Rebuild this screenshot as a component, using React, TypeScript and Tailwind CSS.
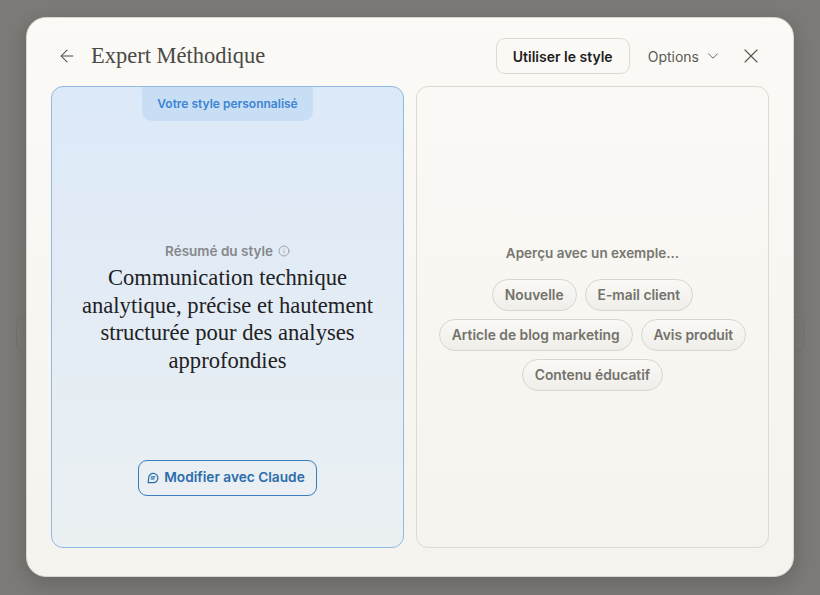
import React from 'react';
import { ArrowLeft, ChevronDown, X, Info } from 'lucide-react';

const SANS = "font-['Inter','Liberation_Sans',sans-serif]";

const samples = ['Nouvelle', 'E-mail client', 'Article de blog marketing', 'Avis produit', 'Contenu éducatif'];

const ChatIcon = () => (
  <svg width="12" height="12" viewBox="0 0 12 12" fill="none" stroke="currentColor" strokeWidth="1.2" className="shrink-0">
    <path d="M1.2 10.8 L1.7 6 A4.6 4.6 0 1 1 6 10.6 H1.2 Z" strokeLinejoin="round" />
    <path d="M4.2 4.8 H8 M4.2 6.9 H7" strokeLinecap="round" />
  </svg>
);

const App: React.FC = () => {
  return (
    <div className={`relative h-[595px] w-[820px] overflow-hidden bg-[#7c7b78] pt-[17px] ${SANS}`}>
      {/* page behind the backdrop */}
      <div className="absolute left-[16px] top-[316px] h-[37px] w-[788px] rounded-[10px] border border-[#747370]" />

      <div className="relative mx-auto flex h-[560px] w-[768px] flex-col rounded-[20px] border border-[#d9d7d0] bg-gradient-to-b from-[#fbfaf7] to-[#f4f3ed] px-[24px] pb-[28px] shadow-[0_6px_24px_rgba(0,0,0,0.2)]">
        <div className="flex h-[68px] shrink-0 items-center pt-[8px]">
          <ArrowLeft className="ml-[6px] h-[20px] w-[20px] text-[#4a4944]" strokeWidth={1.25} />
          <h1 className="ml-[14px] font-['Liberation_Serif',serif] text-[22.5px] text-[#4a4944]">Expert Méthodique</h1>
          <button className="ml-auto h-[36px] w-[134px] rounded-[9px] border border-[#dcdad3] text-[14px] font-semibold text-[#1f1e1c]">
            Utiliser le style
          </button>
          <div className="ml-[18px] flex items-center text-[14px] text-[#5b5a55]">
            Options
            <ChevronDown className="ml-[5px] h-[18px] w-[18px]" strokeWidth={1.2} />
          </div>
          <X className="ml-[17px] mr-[6px] h-[24px] w-[24px] text-[#55544f]" strokeWidth={1.1} />
        </div>

        <div className="grid min-h-0 flex-1 grid-cols-2 gap-[12px]">
          <div className="relative flex flex-col items-center rounded-[12px] border border-[#8fb8e2] bg-gradient-to-b from-[#dce9f8] to-[#ebf0f2]">
            <div className="flex h-[34px] w-[171px] items-center justify-center rounded-b-[10px] bg-[#c8def4] text-[12px] font-semibold text-[#3c85d3]">
              Votre style personnalisé
            </div>
            <div className="mt-[120px] flex items-center gap-[5px] text-[13.5px] font-semibold text-[#85878a]">
              Résumé du style
              <Info className="h-[12px] w-[12px]" strokeWidth={1.4} />
            </div>
            <p className="mt-[3px] w-[312px] text-center font-['Liberation_Serif',serif] text-[22.6px] leading-[27.6px] text-[#22211f]">
              Communication technique analytique, précise et hautement structurée pour des analyses approfondies
            </p>
            <button className="mt-[85px] flex h-[36px] w-[179px] items-center justify-center gap-[5px] rounded-[9px] border border-[#3a7dbd] pr-[3px] text-[13.7px] font-semibold text-[#2d6cab]">
              <ChatIcon />
              Modifier avec Claude
            </button>
          </div>

          <div className="flex flex-col items-center rounded-[12px] border border-[#dcdad3] pt-[156px]">
            <div className="text-[13.5px] font-semibold text-[#77766f]">Aperçu avec un exemple...</div>
            <div className="mt-[16px] flex w-[330px] flex-wrap justify-center gap-x-[8px] gap-y-[8px]">
              {samples.map((s) => (
                <span
                  key={s}
                  className="flex h-[32px] items-center rounded-full border border-[#d8d6cf] bg-gradient-to-b from-[#faf9f6] to-[#efeee9] px-[12px] text-[13.8px] font-semibold text-[#73726b]"
                >
                  {s}
                </span>
              ))}
            </div>
          </div>
        </div>
      </div>
    </div>
  );
};

export default App;
